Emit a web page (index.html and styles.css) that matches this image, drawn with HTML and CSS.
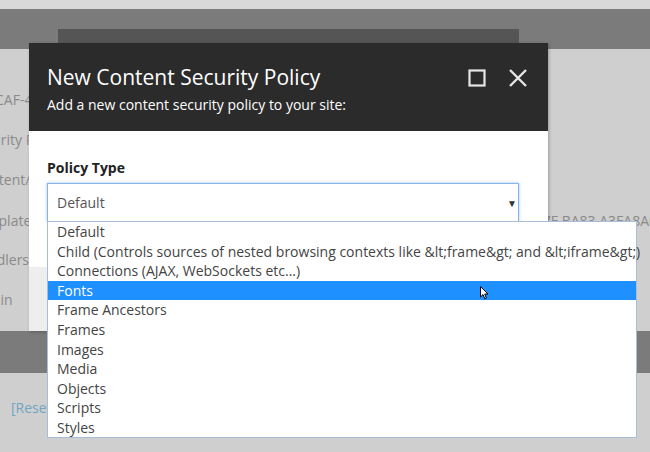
FILE: index.html
```html
<!DOCTYPE html>
<html>
<head>
<meta charset="utf-8">
<link rel="stylesheet" href="styles.css">
</head>
<body>
<div class="page">
  <div class="topbar"></div>
  <div class="band"><div class="tab"></div></div>
  <div class="content">
    <div class="row">2B8CAF-4E0B-9D2C</div>
    <div class="row">Security Policy</div>
    <div class="row">/content/policy</div>
    <div class="row split"><span class="left">Template</span><span class="right">E7F BA83 A3FA8A0C</span></div>
    <div class="row">Handlers, modules</div>
    <div class="row">Admin</div>
  </div>
  <div class="band2"></div>
  <div class="footer"><a class="link">[Reset]</a></div>
</div>

<div class="dialog">
  <div class="dlg-head">
    <div class="dlg-titles">
      <div class="dlg-title">New Content Security Policy</div>
      <div class="dlg-sub">Add a new content security policy to your site:</div>
    </div>
    <div class="dlg-icons">
      <svg class="ico" width="18" height="18" viewBox="0 0 18 18"><rect x="1.5" y="1.5" width="15" height="15" fill="none" stroke="#e6e6e6" stroke-width="2.2"/></svg>
      <svg class="ico" width="20" height="20" viewBox="0 0 20 20"><path d="M2 2 L18 18 M18 2 L2 18" stroke="#e6e6e6" stroke-width="2.4" fill="none"/></svg>
    </div>
  </div>
  <div class="dlg-body">
    <div class="label">Policy Type</div>
    <div class="select"><span>Default</span><span class="arrow">▼</span></div>
  </div>
  <div class="dlg-foot"></div>
</div>

<ul class="listbox">
  <li>Default</li>
  <li>Child (Controls sources of nested browsing contexts like &amp;lt;frame&amp;gt; and &amp;lt;iframe&amp;gt;)</li>
  <li>Connections (AJAX, WebSockets etc...)</li>
  <li class="sel">Fonts</li>
  <li>Frame Ancestors</li>
  <li>Frames</li>
  <li>Images</li>
  <li>Media</li>
  <li>Objects</li>
  <li>Scripts</li>
  <li>Styles</li>
</ul>

<svg class="cursor" width="9" height="14" viewBox="0 0 9 14"><path d="M0.5 0.5 L0.5 11 L3 8.6 L4.8 12.8 L6.4 12.1 L4.7 8.1 L8 8.1 Z" fill="#fff" stroke="#000" stroke-width="1" stroke-linejoin="round"/></svg>
</body>
</html>
```

FILE: styles.css
```css
* { box-sizing: border-box; }
html, body { margin: 0; padding: 0; }
body {
  width: 650px;
  height: 452px;
  overflow: hidden;
  background: #cfcfcf;
  font-family: "Open Sans", "Noto Sans", sans-serif;
  position: relative;
}
.page { display: flex; flex-direction: column; }
.topbar { height: 9px; background: #d9d9d9; }
.band {
  height: 40px;
  background: #7b7b7b;
  padding: 20px 0 0 58px;
  display: flex;
}
.tab { width: 461px; background: #555555; }
.content {
  height: 282px;
  padding-top: 41px;
  margin-left: -30px;
  display: flex;
  flex-direction: column;
}
.row {
  height: 40px;
  line-height: 20px;
  font-size: 14px;
  color: #8a8a8a;
  white-space: nowrap;
}
.row.split { display: flex; padding-top: 1px; }
.left { width: 565px; flex: none; }
.band2 { height: 42px; background: #7b7b7b; }
.footer { padding: 25px 0 0 11px; font-size: 14px; }
.link { color: #6fa6c2; }

.dialog {
  position: absolute;
  left: 29px;
  top: 43px;
  width: 519px;
  height: 288px;
  display: flex;
  flex-direction: column;
  box-shadow: 1px 1px 3px rgba(0,0,0,0.25);
}
.dlg-head {
  height: 88px;
  background: #2b2b2b;
  display: flex;
  justify-content: space-between;
  padding: 18px 20px 0 18px;
}
.dlg-title { color: #fff; font-size: 21px; line-height: 32px; }
.dlg-sub { color: #fff; font-size: 14px; line-height: 20px; margin-top: 2px; }
.dlg-icons { display: flex; gap: 22px; padding-top: 7px; align-items: flex-start; }
.dlg-icons .ico:first-child { margin-top: 1px; }
.dlg-body {
  height: 136px;
  background: #fff;
  padding: 27px 29px 0 18px;
}
.label { font-size: 14px; font-weight: 700; color: #222; line-height: 20px; }
.select {
  margin-top: 5px;
  height: 39px;
  border: 1px solid #86b3ea;
  box-shadow: 0 0 3px rgba(90,150,230,0.55);
  display: flex;
  align-items: center;
  justify-content: space-between;
  padding: 0 1px 0 9px;
  font-size: 14px;
  color: #555;
}
.arrow { font-size: 10px; color: #333; }
.dlg-foot { flex: 1; background: #eeeeee; }

.listbox {
  position: absolute;
  left: 47px;
  top: 221px;
  width: 590px;
  height: 217px;
  margin: 0;
  padding: 0;
  list-style: none;
  background: #fff;
  border: 1px solid #a9bcd8;
}
.listbox li {
  height: 19.6px;
  line-height: 19.6px;
  padding-left: 9px;
  font-size: 14px;
  color: #444;
  white-space: nowrap;
}
.listbox li.sel { background: #1e90ff; color: #fff; }
.cursor { position: absolute; left: 480px; top: 286px; }
```
